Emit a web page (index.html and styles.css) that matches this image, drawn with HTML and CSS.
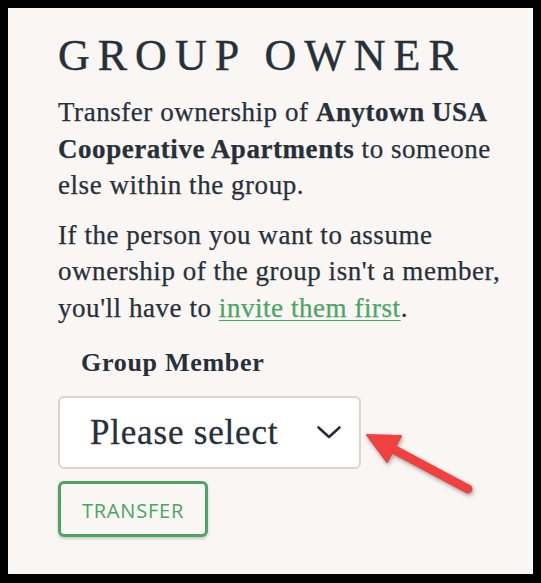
FILE: index.html
```html
<!DOCTYPE html>
<html lang="en">
<head>
<meta charset="utf-8">
<title>Group Owner</title>
<link rel="stylesheet" href="styles.css">
</head>
<body>
<main class="panel">
  <h1 class="title">GROUP OWNER</h1>
  <p class="text">Transfer ownership of <strong>Anytown USA Cooperative Apartments</strong> to someone else within the group.</p>
  <p class="text">If the person you want to assume ownership of the group isn't a member, you'll have to <a class="link" href="#">invite them first</a>.</p>
  <label class="label">Group Member</label>
  <div class="select">
    <span class="select-value">Please select</span>
    <svg class="chevron" width="24" height="13" viewBox="0 0 24 13"><path d="M1.5 1.5 L12 11 L22.5 1.5" fill="none" stroke="#27303a" stroke-width="2.6" stroke-linecap="round" stroke-linejoin="round"/></svg>
  </div>
  <button class="btn" type="button">TRANSFER</button>
  <svg class="arrow" width="120" height="80" viewBox="0 0 120 80">
    <line x1="28" y1="20" x2="105" y2="61" stroke="#f0403f" stroke-width="9" stroke-linecap="round"/>
    <polygon points="4,7 38,8 24,34" fill="#f0403f" stroke="#f0403f" stroke-width="2" stroke-linejoin="round"/>
  </svg>
</main>
</body>
</html>
```

FILE: styles.css
```css
html, body {
  margin: 0;
  padding: 0;
}
body {
  background: #000;
  padding: 8px 8px 9px 8px;
}
.panel {
  position: relative;
  box-sizing: border-box;
  height: 566px;
  background: #f9f6f4;
  padding: 23px 10px 0 50px;
  color: #27303a;
  font-family: "Liberation Serif", "Times New Roman", serif;
  display: flex;
  flex-direction: column;
  align-items: flex-start;
}
.title {
  margin: 0;
  font-size: 44px;
  line-height: 50px;
  font-weight: 400;
  letter-spacing: 8px;
  -webkit-text-stroke: 0.4px #27303a;
}
.text {
  margin: 13px 0 0 0;
  font-size: 27px;
  line-height: 36.5px;
  letter-spacing: 0.55px;
  -webkit-text-stroke: 0.25px #27303a;
}
.text strong {
  font-weight: 700;
}
.link {
  color: #4aa564;
  -webkit-text-stroke: 0.25px #4aa564;
  text-decoration: underline;
  text-underline-offset: 3px;
  text-decoration-thickness: 1px;
}
.label {
  margin: 18px 0 0 23px;
  font-size: 26px;
  line-height: 37px;
  font-weight: 700;
  letter-spacing: 0.7px;
}
.select {
  margin-top: 15px;
  box-sizing: border-box;
  width: 303px;
  height: 73px;
  background: #fff;
  border: 2px solid #dcd5cd;
  border-radius: 6px;
  display: flex;
  align-items: center;
  padding: 0 18px 0 30px;
}
.select-value {
  font-size: 35px;
  line-height: 40px;
  letter-spacing: 0.8px;
  -webkit-text-stroke: 0.3px #27303a;
}
.chevron {
  margin-left: auto;
  display: block;
}
.btn {
  margin-top: 12px;
  box-sizing: border-box;
  width: 150px;
  height: 56px;
  background: #f9f6f4;
  border: 3px solid #4aa564;
  border-radius: 6px;
  box-shadow: 0 2px 3px rgba(0, 0, 0, 0.18);
  color: #4aa564;
  font-family: "Open Sans", "Noto Sans", sans-serif;
  font-size: 20px;
  letter-spacing: 0.8px;
  padding: 3px 0 0 0;
  display: flex;
  align-items: center;
  justify-content: center;
}
.arrow {
  position: absolute;
  left: 355px;
  top: 420px;
  filter: drop-shadow(1px 2px 2px rgba(0, 0, 0, 0.35));
}
```
